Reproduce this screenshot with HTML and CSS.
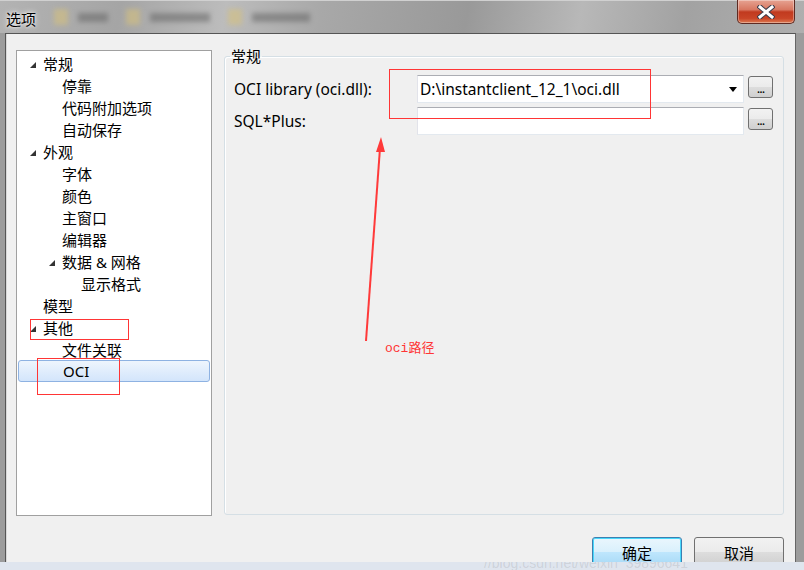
FILE: index.html
```html
<!DOCTYPE html>
<html lang="zh-CN">
<head>
    <meta charset="UTF-8">
    <title>选项</title>
    <link rel="stylesheet" href="styles.css">
</head>
<body>

<div class="window">
    <!-- Title bar -->
    <div class="titlebar">
        <span class="title">选项</span>
        <span class="ghost"><i class="ghost-icon"></i><i class="ghost-text short"></i></span>
        <span class="ghost"><i class="ghost-icon"></i><i class="ghost-text long"></i></span>
        <span class="ghost"><i class="ghost-icon"></i><i class="ghost-text mid"></i></span>
        <span class="close-btn">
            <svg width="18" height="14" viewBox="0 0 18 14">
                <path d="M3 2 L15 12 M15 2 L3 12" stroke="#3b3b4a" stroke-width="5" stroke-linecap="square"/>
                <path d="M3 2 L15 12 M15 2 L3 12" stroke="#ffffff" stroke-width="3" stroke-linecap="square"/>
            </svg>
        </span>
    </div>

    <div class="frame">
        <div class="content">
            <div class="main-row">
                <!-- Options tree -->
                <ul class="tree">
                    <li class="lvl0"><span class="slot"><i class="caret"></i></span>常规</li>
                    <li class="lvl1"><span class="slot"></span>停靠</li>
                    <li class="lvl1"><span class="slot"></span>代码附加选项</li>
                    <li class="lvl1"><span class="slot"></span>自动保存</li>
                    <li class="lvl0"><span class="slot"><i class="caret"></i></span>外观</li>
                    <li class="lvl1"><span class="slot"></span>字体</li>
                    <li class="lvl1"><span class="slot"></span>颜色</li>
                    <li class="lvl1"><span class="slot"></span>主窗口</li>
                    <li class="lvl1"><span class="slot"></span>编辑器</li>
                    <li class="lvl1"><span class="slot"><i class="caret"></i></span>数据 &amp; 网格</li>
                    <li class="lvl2"><span class="slot"></span>显示格式</li>
                    <li class="lvl0"><span class="slot"></span>模型</li>
                    <li class="lvl0"><span class="slot"><i class="caret"></i></span>其他</li>
                    <li class="lvl1"><span class="slot"></span>文件关联</li>
                    <li class="lvl1 selected"><span class="slot"></span>OCI</li>
                </ul>

                <!-- Settings group -->
                <fieldset class="group">
                    <legend>常规</legend>
                    <div class="form-grid">
                        <label class="field-label">OCI library (oci.dll):</label>
                        <div class="combo">
                            <span class="combo-text">D:\instantclient_12_1\oci.dll</span>
                            <i class="combo-arrow"></i>
                        </div>
                        <button class="browse">...</button>

                        <label class="field-label">SQL*Plus:</label>
                        <div class="textbox"></div>
                        <button class="browse">...</button>
                    </div>
                </fieldset>
            </div>

            <div class="buttons">
                <button class="dlg-btn default">确定</button>
                <button class="dlg-btn">取消</button>
            </div>
        </div>
    </div>

    <!-- Red annotations drawn over the screenshot -->
    <div class="mark mark-path"></div>
    <div class="mark mark-other"></div>
    <div class="mark mark-oci"></div>
    <svg class="arrow" width="804" height="570" viewBox="0 0 804 570">
        <line x1="366" y1="341" x2="380" y2="148" stroke="#ff3a3a" stroke-width="2"/>
        <polygon points="381,137 376,152 385,152" fill="#ff3a3a"/>
    </svg>
    <span class="note">oci路径</span>

    <div class="bottom-band">
        <span class="watermark">//blog.csdn.net/weixin_39896641</span>
    </div>
</div>

</body>
</html>
```

FILE: styles.css
```css
/* General styles */
body {
    margin: 0;
    padding: 0;
    font-family: "Noto Sans", "Noto Sans CJK SC", sans-serif;
    font-size: 15px;
    color: #000;
}

.window {
    position: relative;
    width: 804px;
    height: 570px;
    overflow: hidden;
    display: flex;
    flex-direction: column;
    background: #9c9c9c;
}

/* Title bar */
.titlebar {
    height: 33px;
    display: flex;
    align-items: flex-start;
    padding-right: 9px;
    background: linear-gradient(100deg, #b3b3b3 0%, #a5a5a5 15%, #bcbcbc 28%, #a8a8a8 40%, #999999 58%, #b8b8b8 72%, #a2a2a2 85%, #afafaf 100%);
    border-top: 1px solid #d0d0d0;
    box-sizing: border-box;
}

.title {
    margin: 9px 0 0 6px;
    font-family: "Noto Sans CJK SC", sans-serif;
    font-size: 15px;
    line-height: 18px;
    text-shadow: 0 0 6px #fff, 0 0 3px #fff;
}

.ghost {
    display: flex;
    align-items: center;
    gap: 10px;
    margin: 8px 0 0 18px;
    filter: blur(2.5px);
    opacity: 0.55;
}

.ghost-icon {
    width: 14px;
    height: 16px;
    background: #d8c27a;
}

.ghost-text {
    height: 9px;
    background: #666;
}

.ghost-text.short { width: 30px; }
.ghost-text.long { width: 60px; }
.ghost-text.mid { width: 58px; }

.close-btn {
    margin-left: auto;
    width: 56px;
    height: 23px;
    margin-top: -1px;
    display: flex;
    align-items: center;
    justify-content: center;
    border: 1px solid #5e2a22;
    border-top: none;
    border-radius: 0 0 5px 5px;
    background: linear-gradient(#e6a392 0%, #d87761 42%, #c13a1f 52%, #c94527 80%, #dd7a52 100%);
    box-shadow: inset 0 0 0 1px rgba(255, 255, 255, 0.35);
}

/* Window frame */
.frame {
    flex: 1;
    display: flex;
    padding: 0 8px 0 5px;
}

.content {
    flex: 1;
    display: flex;
    flex-direction: column;
    padding: 13px 10px 0 10px;
    background: #f0f0f0;
    border-left: 1px solid #555;
    border-right: 1px solid #666;
    border-top: 1px solid #555;
    box-shadow: inset 1px 0 0 #d8d8d8;
}

.main-row {
    display: flex;
    align-items: flex-start;
}

/* Tree */
.tree {
    list-style: none;
    margin: 3px 0 0 0;
    padding: 1px 0 0 0;
    width: 196px;
    height: 466px;
    box-sizing: border-box;
    background: #fff;
    border: 1px solid #a0a0a0;
}

.tree li {
    height: 22px;
    display: flex;
    align-items: center;
    white-space: nowrap;
    box-sizing: border-box;
}

.tree .lvl0 { padding-left: 13px; }
.tree .lvl1 { padding-left: 32px; }
.tree .lvl2 { padding-left: 51px; }

.slot {
    width: 13px;
    flex-shrink: 0;
    display: flex;
    align-items: center;
}

.caret {
    width: 0;
    height: 0;
    margin-top: 3px;
    border-left: 6px solid transparent;
    border-bottom: 6px solid #333;
}

.tree .selected {
    margin: 0 1px;
    padding-left: 31px;
    border: 1px solid #8eb2e2;
    border-radius: 3px;
    background: linear-gradient(#eef5fd, #d3e5fb);
}

/* Group box */
.group {
    margin: 0 0 0 12px;
    padding: 10px 8px 0 8px;
    width: 560px;
    height: 468px;
    box-sizing: border-box;
    border: 1px solid #d5dfe5;
    border-radius: 3px;
    box-shadow: inset 1px 1px 0 #fff;
    min-width: 0;
}

.group legend {
    font-family: "Noto Sans CJK SC", sans-serif;
    font-size: 15px;
    line-height: 18px;
    padding: 0 1px;
    margin-left: -3px;
}

.form-grid {
    display: grid;
    grid-template-columns: 184px 327px 25px;
    grid-auto-rows: 28px;
    row-gap: 4px;
    align-items: center;
}

.field-label {
    font-size: 15.5px;
    padding-left: 1px;
}

.combo,
.textbox {
    height: 28px;
    box-sizing: border-box;
    background: #fff;
    border: 1px solid #e3e9ef;
    border-top-color: #abadb3;
    border-left-color: #e2e3ea;
    display: flex;
    align-items: center;
}

.combo-text {
    flex: 1;
    padding-left: 2px;
    font-size: 15.5px;
}

.combo-arrow {
    width: 0;
    height: 0;
    margin-right: 6px;
    border-left: 4px solid transparent;
    border-right: 4px solid transparent;
    border-top: 5px solid #000;
}

.browse {
    margin-left: 4px;
    margin-top: 1px;
    width: 25px;
    height: 22px;
    padding: 0;
    box-sizing: border-box;
    border: 1px solid #707070;
    border-radius: 3px;
    background: linear-gradient(#f2f2f2 0%, #ebebeb 50%, #dddddd 51%, #cfcfcf 100%);
    font-family: "Noto Sans", sans-serif;
    font-size: 13px;
    line-height: 22px;
    letter-spacing: -1px;
    align-self: start;
}

/* Dialog buttons */
.buttons {
    display: flex;
    justify-content: flex-end;
    gap: 12px;
    margin-top: 21px;
    padding-right: 1px;
}

.dlg-btn {
    width: 90px;
    height: 30px;
    border: 1px solid #707070;
    border-radius: 3px;
    background: linear-gradient(#f2f2f2 0%, #ebebeb 50%, #dddddd 51%, #cfcfcf 100%);
    font-family: "Noto Sans CJK SC", sans-serif;
    font-size: 15px;
    color: #000;
}

.dlg-btn.default {
    border-color: #3c7fb1;
    background: linear-gradient(#eaf6fd 0%, #d9f0fc 50%, #bee6fd 51%, #a7d9f5 100%);
    box-shadow: inset 0 0 0 1px #48d8fb;
}

/* Annotations */
.mark {
    position: absolute;
    border: 1px solid #ff3535;
    box-sizing: border-box;
}

.mark-path {
    left: 389px;
    top: 69px;
    width: 262px;
    height: 50px;
}

.mark-other {
    left: 30px;
    top: 319px;
    width: 99px;
    height: 21px;
}

.mark-oci {
    left: 37px;
    top: 358px;
    width: 83px;
    height: 37px;
}

.arrow {
    position: absolute;
    left: 0;
    top: 0;
    pointer-events: none;
}

.note {
    position: absolute;
    left: 385px;
    top: 340px;
    color: #ff3535;
    font-family: "Liberation Mono", "Noto Sans CJK SC", monospace;
    font-size: 13px;
    line-height: 18px;
}

.bottom-band {
    position: absolute;
    left: 0;
    right: 0;
    bottom: 0;
    height: 8px;
    overflow: hidden;
    background: #dfe5ee;
}

.watermark {
    display: block;
    margin: -6px 0 0 484px;
    font-family: "Liberation Sans", sans-serif;
    font-size: 14px;
    line-height: 14px;
    color: rgba(90, 90, 90, 0.15);
    white-space: nowrap;
}
```
